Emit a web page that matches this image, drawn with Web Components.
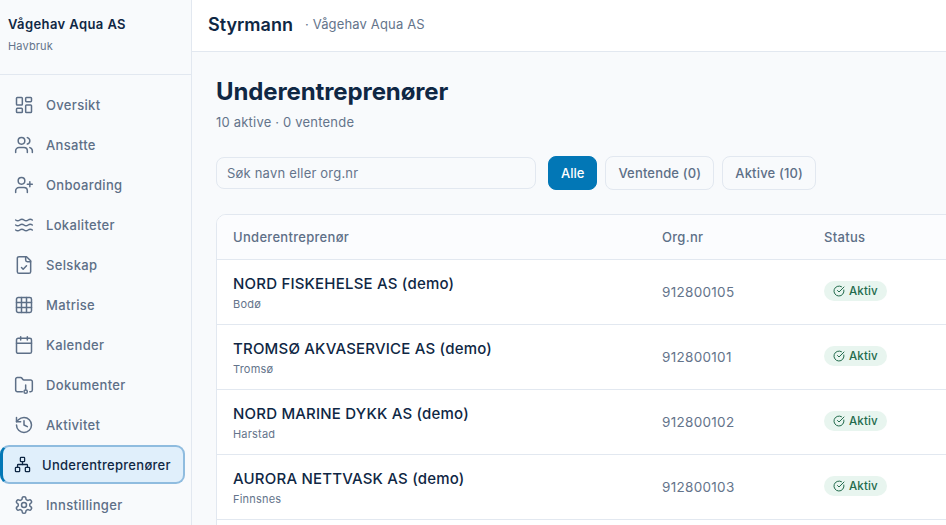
<!DOCTYPE html>
<html lang="no">
<head>
<meta charset="utf-8">
<title>Underentreprenører</title>
<style>
  html, body { margin: 0; height: 100%; overflow: hidden; background: #f8fafc; }
  body { font-family: Inter, "Noto Sans", sans-serif; color: #0f2744; }
</style>
</head>
<body>
<app-shell>
  <side-bar slot="side"></side-bar>
  <top-bar slot="top"></top-bar>
  <sub-page></sub-page>
</app-shell>

<script>
// Icons, 24 box, stroked
const ICONS = {
  oversikt: '<rect x="3" y="3" width="7" height="9" rx="1"/><rect x="14" y="3" width="7" height="5" rx="1"/><rect x="14" y="12" width="7" height="9" rx="1"/><rect x="3" y="16" width="7" height="5" rx="1"/>',
  ansatte: '<path d="M16 21v-2a4 4 0 0 0-4-4H6a4 4 0 0 0-4 4v2"/><circle cx="9" cy="7" r="4"/><path d="M22 21v-2a4 4 0 0 0-3-3.87"/><path d="M16 3.13a4 4 0 0 1 0 7.75"/>',
  onboarding: '<path d="M16 21v-2a4 4 0 0 0-4-4H6a4 4 0 0 0-4 4v2"/><circle cx="9" cy="7" r="4"/><line x1="19" y1="8" x2="19" y2="14"/><line x1="22" y1="11" x2="16" y2="11"/>',
  lokaliteter: '<path d="M2 6c.6.5 1.2 1 2.5 1C7 7 7 5 9.500 5c2.600 0 2.400 2 5 2 2.500 0 2.500-2 5-2 1.300 0 1.900.5 2.500 1"/><path d="M2 12c.6.5 1.200 1 2.500 1 2.500 0 2.500-2 5-2 2.600 0 2.400 2 5 2 2.500 0 2.500-2 5-2 1.300 0 1.900.5 2.500 1"/><path d="M2 18c.6.5 1.200 1 2.500 1 2.500 0 2.500-2 5-2 2.600 0 2.400 2 5 2 2.500 0 2.500-2 5-2 1.300 0 1.900.5 2.500 1"/>',
  selskap: '<path d="M15 2H6a2 2 0 0 0-2 2v16a2 2 0 0 0 2 2h12a2 2 0 0 0 2-2V7Z"/><path d="M14 2v4a2 2 0 0 0 2 2h4"/><path d="m9 15 2 2 4-4"/>',
  matrise: '<rect x="3" y="3" width="18" height="18" rx="2"/><path d="M3 9h18"/><path d="M3 15h18"/><path d="M9 3v18"/><path d="M15 3v18"/>',
  kalender: '<path d="M8 2v4"/><path d="M16 2v4"/><rect x="3" y="4" width="18" height="18" rx="2"/><path d="M3 10h18"/>',
  dokumenter: '<path d="M10 20H4a2 2 0 0 1-2-2V5a2 2 0 0 1 2-2h3.900a2 2 0 0 1 1.690.9l.810 1.200a2 2 0 0 0 1.670.9H20a2 2 0 0 1 2 2v10a2 2 0 0 1-2 2h-1"/><path d="M14 12v5"/><circle cx="14" cy="20" r="2"/>',
  aktivitet: '<path d="M3 12a9 9 0 1 0 9-9 9.750 9.750 0 0 0-6.740 2.740L3 8"/><path d="M3 3v5h5"/><path d="M12 7v5l4 2"/>',
  nettverk: '<rect x="16" y="16" width="6" height="6" rx="1"/><rect x="2" y="16" width="6" height="6" rx="1"/><rect x="9" y="2" width="6" height="6" rx="1"/><path d="M5 16v-3a1 1 0 0 1 1-1h12a1 1 0 0 1 1 1v3"/><path d="M12 12V8"/>',
  innstillinger: '<path d="M12.220 2h-.440a2 2 0 0 0-2 2v.180a2 2 0 0 1-1 1.730l-.430.250a2 2 0 0 1-2 0l-.150-.080a2 2 0 0 0-2.730.730l-.220.380a2 2 0 0 0 .730 2.730l.150.100a2 2 0 0 1 1 1.720v.510a2 2 0 0 1-1 1.740l-.150.090a2 2 0 0 0-.730 2.730l.220.380a2 2 0 0 0 2.730.730l.150-.080a2 2 0 0 1 2 0l.430.250a2 2 0 0 1 1 1.730V20a2 2 0 0 0 2 2h.440a2 2 0 0 0 2-2v-.180a2 2 0 0 1 1-1.730l.430-.250a2 2 0 0 1 2 0l.150.080a2 2 0 0 0 2.730-.730l.220-.390a2 2 0 0 0-.730-2.730l-.150-.080a2 2 0 0 1-1-1.740v-.500a2 2 0 0 1 1-1.740l.150-.090a2 2 0 0 0 .730-2.730l-.220-.380a2 2 0 0 0-2.730-.730l-.150.080a2 2 0 0 1-2 0l-.430-.250a2 2 0 0 1-1-1.730V4a2 2 0 0 0-2-2z"/><circle cx="12" cy="12" r="3"/>',
  aktiv: '<path d="M21.800 10A10 10 0 1 1 17 3.340"/><path d="m9 11 3 3L22 4"/>'
};

const icon = (name, size, width = 2) =>
  `<svg width="${size}" height="${size}" viewBox="0 0 24 24" fill="none" stroke="currentColor" stroke-width="${width}" stroke-linecap="round" stroke-linejoin="round">${ICONS[name]}</svg>`;

class AppShell extends HTMLElement {
  constructor() {
    super();
    this.attachShadow({ mode: 'open' });
    this.shadowRoot.innerHTML = `
      <style>
        :host { display: grid; grid-template-columns: 192px 1fr; height: 525px; width: 946px; overflow: hidden; }
        .main { display: flex; flex-direction: column; min-width: 0; overflow: hidden; }
      </style>
      <slot name="side"></slot>
      <div class="main">
        <slot name="top"></slot>
        <slot></slot>
      </div>
    `;
  }
}

class SideBar extends HTMLElement {
  constructor() {
    super();
    this.attachShadow({ mode: 'open' });
    const items = [
      ['oversikt', 'Oversikt'], ['ansatte', 'Ansatte'], ['onboarding', 'Onboarding'],
      ['lokaliteter', 'Lokaliteter'], ['selskap', 'Selskap'], ['matrise', 'Matrise'],
      ['kalender', 'Kalender'], ['dokumenter', 'Dokumenter'], ['aktivitet', 'Aktivitet'],
      ['nettverk', 'Underentreprenører', true], ['innstillinger', 'Innstillinger']
    ];
    this.shadowRoot.innerHTML = `
      <style>
        :host { display: block; box-sizing: border-box; background: #f8fafc; border-right: 1px solid #e2e8f0; overflow: hidden; }
        .brand { box-sizing: border-box; height: 75px; padding: 16px 8px 0; border-bottom: 1px solid #e2e8f0; }
        .name { font-size: 13px; font-weight: 600; line-height: 17px; letter-spacing: .4px; color: #0f2744; }
        .kind { font-size: 11px; line-height: 14px; margin-top: 6px; letter-spacing: .15px; color: #64748b; }
        nav { display: flex; flex-direction: column; padding-top: 10px; }
        a { box-sizing: border-box; display: flex; align-items: center; gap: 12px; height: 40px; padding-left: 14px; font-size: 13px; font-weight: 500; letter-spacing: .33px; color: #5d6f87; }
        a svg { flex: none; }
        a.on {
          height: 39px; margin: 0 6px 1px 0; padding-left: 11px; gap: 11px; letter-spacing: .28px;
          color: #0f2744; background: #e0effb;
          border: 2px solid #8fbcdf; border-left: 3px solid #0277b6; border-radius: 9px;
        }
      </style>
      <div class="brand">
        <div class="name">Vågehav Aqua AS</div>
        <div class="kind">Havbruk</div>
      </div>
      <nav>
        ${items.map(([ic, label, on]) => `<a class="${on ? 'on' : ''}">${icon(ic, on ? 17 : 20, 1.8)}<span>${label}</span></a>`).join('')}
      </nav>
    `;
  }
}

class TopBar extends HTMLElement {
  constructor() {
    super();
    this.attachShadow({ mode: 'open' });
    this.shadowRoot.innerHTML = `
      <style>
        :host { display: flex; flex: none; align-items: center; box-sizing: border-box; height: 52px; padding: 0 16px 3px; background: #fff; border-bottom: 1px solid #e2e8f0; }
        b { font-size: 18px; font-weight: 600; color: #0f2744; }
        span { margin-left: 12px; font-size: 13px; letter-spacing: .16px; color: #64748b; }
      </style>
      <b>Styrmann</b><span>· Vågehav Aqua AS</span>
    `;
  }
}

class FilterBar extends HTMLElement {
  constructor() {
    super();
    this.attachShadow({ mode: 'open' });
    this.shadowRoot.innerHTML = `
      <style>
        :host { display: flex; align-items: center; gap: 8px; }
        .search { box-sizing: border-box; width: 320px; height: 32px; margin-right: 4px; padding: 0 10px; display: flex; align-items: center; font-size: 13px; letter-spacing: .2px; color: #64748b; background: #f8fafc; border: 1px solid #e2e8f0; border-radius: 8px; }
        button { box-sizing: border-box; height: 34px; padding: 0 12px; font: 500 13px Inter, sans-serif; letter-spacing: .17px; color: #5d6f87; background: #f8fafc; border: 1px solid #e2e8f0; border-radius: 8px; }
        button.on { color: #fff; background: #0277b6; border-color: #0277b6; letter-spacing: 0; }
      </style>
      <div class="search">Søk navn eller org.nr</div>
      <button class="on">Alle</button>
      <button>Ventende (0)</button>
      <button>Aktive (10)</button>
    `;
  }
}

class StatusBadge extends HTMLElement {
  constructor() {
    super();
    this.attachShadow({ mode: 'open' });
    this.shadowRoot.innerHTML = `
      <style>
        :host { display: inline-flex; align-items: center; gap: 4px; box-sizing: border-box; height: 20px; padding: 0 9px; font-size: 11.500px; font-weight: 500; letter-spacing: .15px; color: #226b4c; background: #e8f5ef; border-radius: 10px; }
      </style>
      ${icon('aktiv', 12)}<slot></slot>
    `;
  }
}

class VendorRow extends HTMLElement {
  constructor() {
    super();
    this.attachShadow({ mode: 'open' });
    const name = this.getAttribute('name');
    this.shadowRoot.innerHTML = `
      <style>
        :host { display: grid; grid-template-columns: 429px 162px 1fr; align-items: center; box-sizing: border-box; height: 65px; padding-left: 16px; border-top: 1px solid #e2e8f0; background: #fff; }
        .who { margin-top: 2px; }
        .name { font-size: 15px; font-weight: 450; line-height: 18px; letter-spacing: .2px; color: #0f2744; }
        .place { margin-top: 4px; font-size: 11px; line-height: 14px; letter-spacing: .2px; color: #64748b; }
        .org { font-size: 13.500px; letter-spacing: .3px; color: #64748b; }
        .badge { margin-top: -2px; }
      </style>
      ${name ? `
      <div class="who">
        <div class="name">${name}</div>
        <div class="place">${this.getAttribute('place')}</div>
      </div>
      <div class="org">${this.getAttribute('org')}</div>
      <div class="badge"><status-badge>Aktiv</status-badge></div>` : ''}
    `;
  }
}

class VendorTable extends HTMLElement {
  constructor() {
    super();
    this.attachShadow({ mode: 'open' });
    this.shadowRoot.innerHTML = `
      <style>
        :host { display: block; box-sizing: border-box; width: 900px; background: #fff; border: 1px solid #e2e8f0; border-radius: 10px; overflow: hidden; }
        .head { display: grid; grid-template-columns: 429px 162px 1fr; align-items: center; height: 44px; padding-left: 16px; font-size: 13px; font-weight: 500; letter-spacing: .3px; color: #5d6f87; background: #fbfcfe; }
      </style>
      <div class="head"><div>Underentreprenør</div><div>Org.nr</div><div>Status</div></div>
      <slot></slot>
    `;
  }
}

class SubPage extends HTMLElement {
  constructor() {
    super();
    this.attachShadow({ mode: 'open' });
    const rows = [
      ['NORD FISKEHELSE AS (demo)', 'Bodø', '912800105'],
      ['TROMSØ AKVASERVICE AS (demo)', 'Tromsø', '912800101'],
      ['NORD MARINE DYKK AS (demo)', 'Harstad', '912800102'],
      ['AURORA NETTVASK AS (demo)', 'Finnsnes', '912800103']
    ];
    this.shadowRoot.innerHTML = `
      <style>
        :host { display: block; padding: 24px 24px 0; background: #f8fafc; min-width: 0; }
        h1 { margin: 0; font-size: 24px; line-height: 32px; font-weight: 700; letter-spacing: -.11px; color: #0f2744; }
        p { margin: 4px 0 0; font-size: 13px; line-height: 20px; letter-spacing: .2px; color: #64748b; }
        filter-bar { margin-top: 24px; }
        vendor-table { margin-top: 24px; }
      </style>
      <h1>Underentreprenører</h1>
      <p>10 aktive · 0 ventende</p>
      <filter-bar></filter-bar>
      <vendor-table>
        ${rows.map(([n, p, o]) => `<vendor-row name="${n}" place="${p}" org="${o}"></vendor-row>`).join('')}
        <vendor-row></vendor-row>
      </vendor-table>
    `;
  }
}

customElements.define('app-shell', AppShell);
customElements.define('side-bar', SideBar);
customElements.define('top-bar', TopBar);
customElements.define('filter-bar', FilterBar);
customElements.define('status-badge', StatusBadge);
customElements.define('vendor-row', VendorRow);
customElements.define('vendor-table', VendorTable);
customElements.define('sub-page', SubPage);
</script>
</body>
</html>
